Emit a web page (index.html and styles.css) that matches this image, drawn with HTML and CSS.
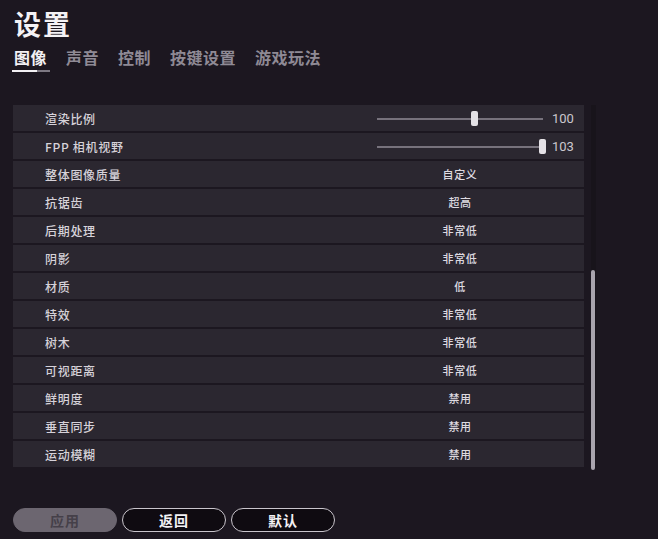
FILE: index.html
```html
<!DOCTYPE html>
<html lang="zh-CN">
<head>
  <meta charset="UTF-8">
  <title>设置</title>
  <link rel="stylesheet" href="styles.css">
</head>
<body>
  <div class="page">
    <h1 class="title">设置</h1>

    <nav class="tabs">
      <span class="tab active">图像</span>
      <span class="tab">声音</span>
      <span class="tab">控制</span>
      <span class="tab">按键设置</span>
      <span class="tab">游戏玩法</span>
    </nav>

    <div class="list-wrap">
      <ul class="list">
        <li class="row">
          <span class="label">渲染比例</span>
          <div class="slider"><div class="track"></div><div class="knob" style="left: 59%"></div></div>
          <span class="num">100</span>
        </li>
        <li class="row">
          <span class="label">FPP 相机视野</span>
          <div class="slider"><div class="track"></div><div class="knob" style="left: 100%"></div></div>
          <span class="num">103</span>
        </li>
        <li class="row"><span class="label">整体图像质量</span><span class="value">自定义</span></li>
        <li class="row"><span class="label">抗锯齿</span><span class="value">超高</span></li>
        <li class="row"><span class="label">后期处理</span><span class="value">非常低</span></li>
        <li class="row"><span class="label">阴影</span><span class="value">非常低</span></li>
        <li class="row"><span class="label">材质</span><span class="value">低</span></li>
        <li class="row"><span class="label">特效</span><span class="value">非常低</span></li>
        <li class="row"><span class="label">树木</span><span class="value">非常低</span></li>
        <li class="row"><span class="label">可视距离</span><span class="value">非常低</span></li>
        <li class="row"><span class="label">鲜明度</span><span class="value">禁用</span></li>
        <li class="row"><span class="label">垂直同步</span><span class="value">禁用</span></li>
        <li class="row"><span class="label">运动模糊</span><span class="value">禁用</span></li>
      </ul>
      <div class="scrollbar"><div class="scroll-thumb"></div></div>
    </div>

    <div class="actions">
      <button class="btn disabled">应用</button>
      <button class="btn">返回</button>
      <button class="btn">默认</button>
    </div>
  </div>
</body>
</html>
```

FILE: styles.css
```css
body { margin: 0; background: #1c1720; font-family: "Noto Sans CJK SC", "Noto Sans", sans-serif; color: #d8d4db; }
.page { width: 658px; height: 539px; padding: 8px 0 0 13px; box-sizing: border-box; }

.title { margin: 0 0 0 1px; font-size: 27px; line-height: 32px; font-weight: 700; letter-spacing: 2px; color: #f4f2f5; }

.tabs { display: flex; gap: 18px; margin-top: 7px; }
.tab { position: relative; font-size: 16px; line-height: 20px; font-weight: 700; letter-spacing: 0.5px; color: #8f8a95; padding: 0 0 5px 1px; }
.tab.active { color: #f2f0f3; }
.tab.active::after { content: ""; position: absolute; left: -1px; bottom: 0; width: 38px; height: 2px; background: linear-gradient(90deg, #f2f0f3 65%, #7d7882 66%); }

.list-wrap { display: flex; margin-top: 33px; }
.list { list-style: none; margin: 0; padding: 0; width: 571px; }
.row { display: grid; grid-template-columns: 364px 166px 1fr; align-items: center; height: 26px; margin-bottom: 2px; background: #2b2730; }
.label { padding-left: 32px; font-size: 12px; font-weight: 500; letter-spacing: 0.7px; color: #d6d2d9; }
.value { text-align: center; font-size: 11px; font-weight: 500; letter-spacing: 0.6px; color: #dedae0; }
.num { padding-left: 9px; font-family: Roboto, sans-serif; font-size: 13px; color: #cbc7ce; }

.slider { position: relative; height: 26px; }
.track { position: absolute; left: 0; right: 0; top: 13px; height: 2px; background: #77727c; }
.knob { position: absolute; top: 6px; width: 7px; height: 15px; margin-left: -4px; border-radius: 2px; background: #e4e1e6; }

.scrollbar { width: 5px; margin-left: 7px; height: 364px; position: relative; background: #18141b; }
.scroll-thumb { margin-top: 165px; height: 200px; width: 4px; border-radius: 2px; background: #a9a4ae; }

.actions { display: flex; gap: 5px; margin-top: 39px; }
.btn { width: 104px; height: 24px; border-radius: 12px; border: 1.5px solid #c9c5cc; background: #0f0b11; color: #f3f1f4; font-family: inherit; font-size: 14px; font-weight: 700; letter-spacing: 1px; padding: 0; }
.btn.disabled { background: #6c6670; border-color: #6c6670; color: #454049; }
```
